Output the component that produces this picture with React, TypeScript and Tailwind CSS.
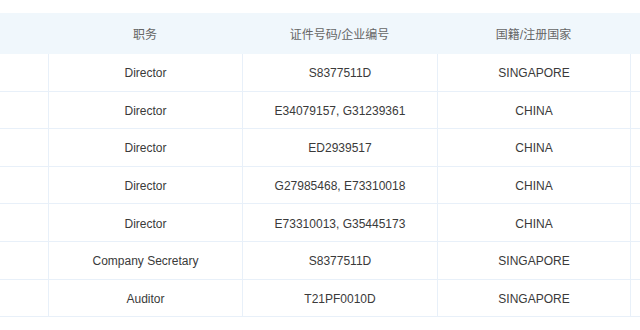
import React from "react";

const rows = [
  ["Director", "S8377511D", "SINGAPORE"],
  ["Director", "E34079157, G31239361", "CHINA"],
  ["Director", "ED2939517", "CHINA"],
  ["Director", "G27985468, E73310018", "CHINA"],
  ["Director", "E73310013, G35445173", "CHINA"],
  ["Company Secretary", "S8377511D", "SINGAPORE"],
  ["Auditor", "T21PF0010D", "SINGAPORE"],
];

export default function App() {
  return (
    <div
      className="w-[640px] h-[330px] bg-white overflow-hidden pt-[13px]"
      style={{ fontFamily: '"Liberation Sans", "Noto Sans CJK SC", sans-serif' }}
    >
      <div className="grid grid-cols-[48px_194px_195px_193px_1fr] h-[41px] bg-[#f0f7fc] text-[12px] text-[#666666] items-center pt-[3px]">
        <div></div>
        <div className="text-center">职务</div>
        <div className="text-center">证件号码/企业编号</div>
        <div className="text-center">国籍/注册国家</div>
        <div></div>
      </div>
      {rows.map((r, i) => (
        <div
          key={i}
          className="grid grid-cols-[48px_194px_195px_193px_1fr] h-[37.6px] border-b border-[#e8f0f9] text-[12px] text-[#3a3a3a]"
        >
          <div></div>
          <div className="border-l border-[#e8f0f9] flex items-center justify-center pt-[2px]">{r[0]}</div>
          <div className="border-l border-[#e8f0f9] flex items-center justify-center pt-[2px]">{r[1]}</div>
          <div className="border-l border-[#e8f0f9] flex items-center justify-center pt-[2px]">{r[2]}</div>
          <div className="border-l border-[#e8f0f9]"></div>
        </div>
      ))}
    </div>
  );
}
